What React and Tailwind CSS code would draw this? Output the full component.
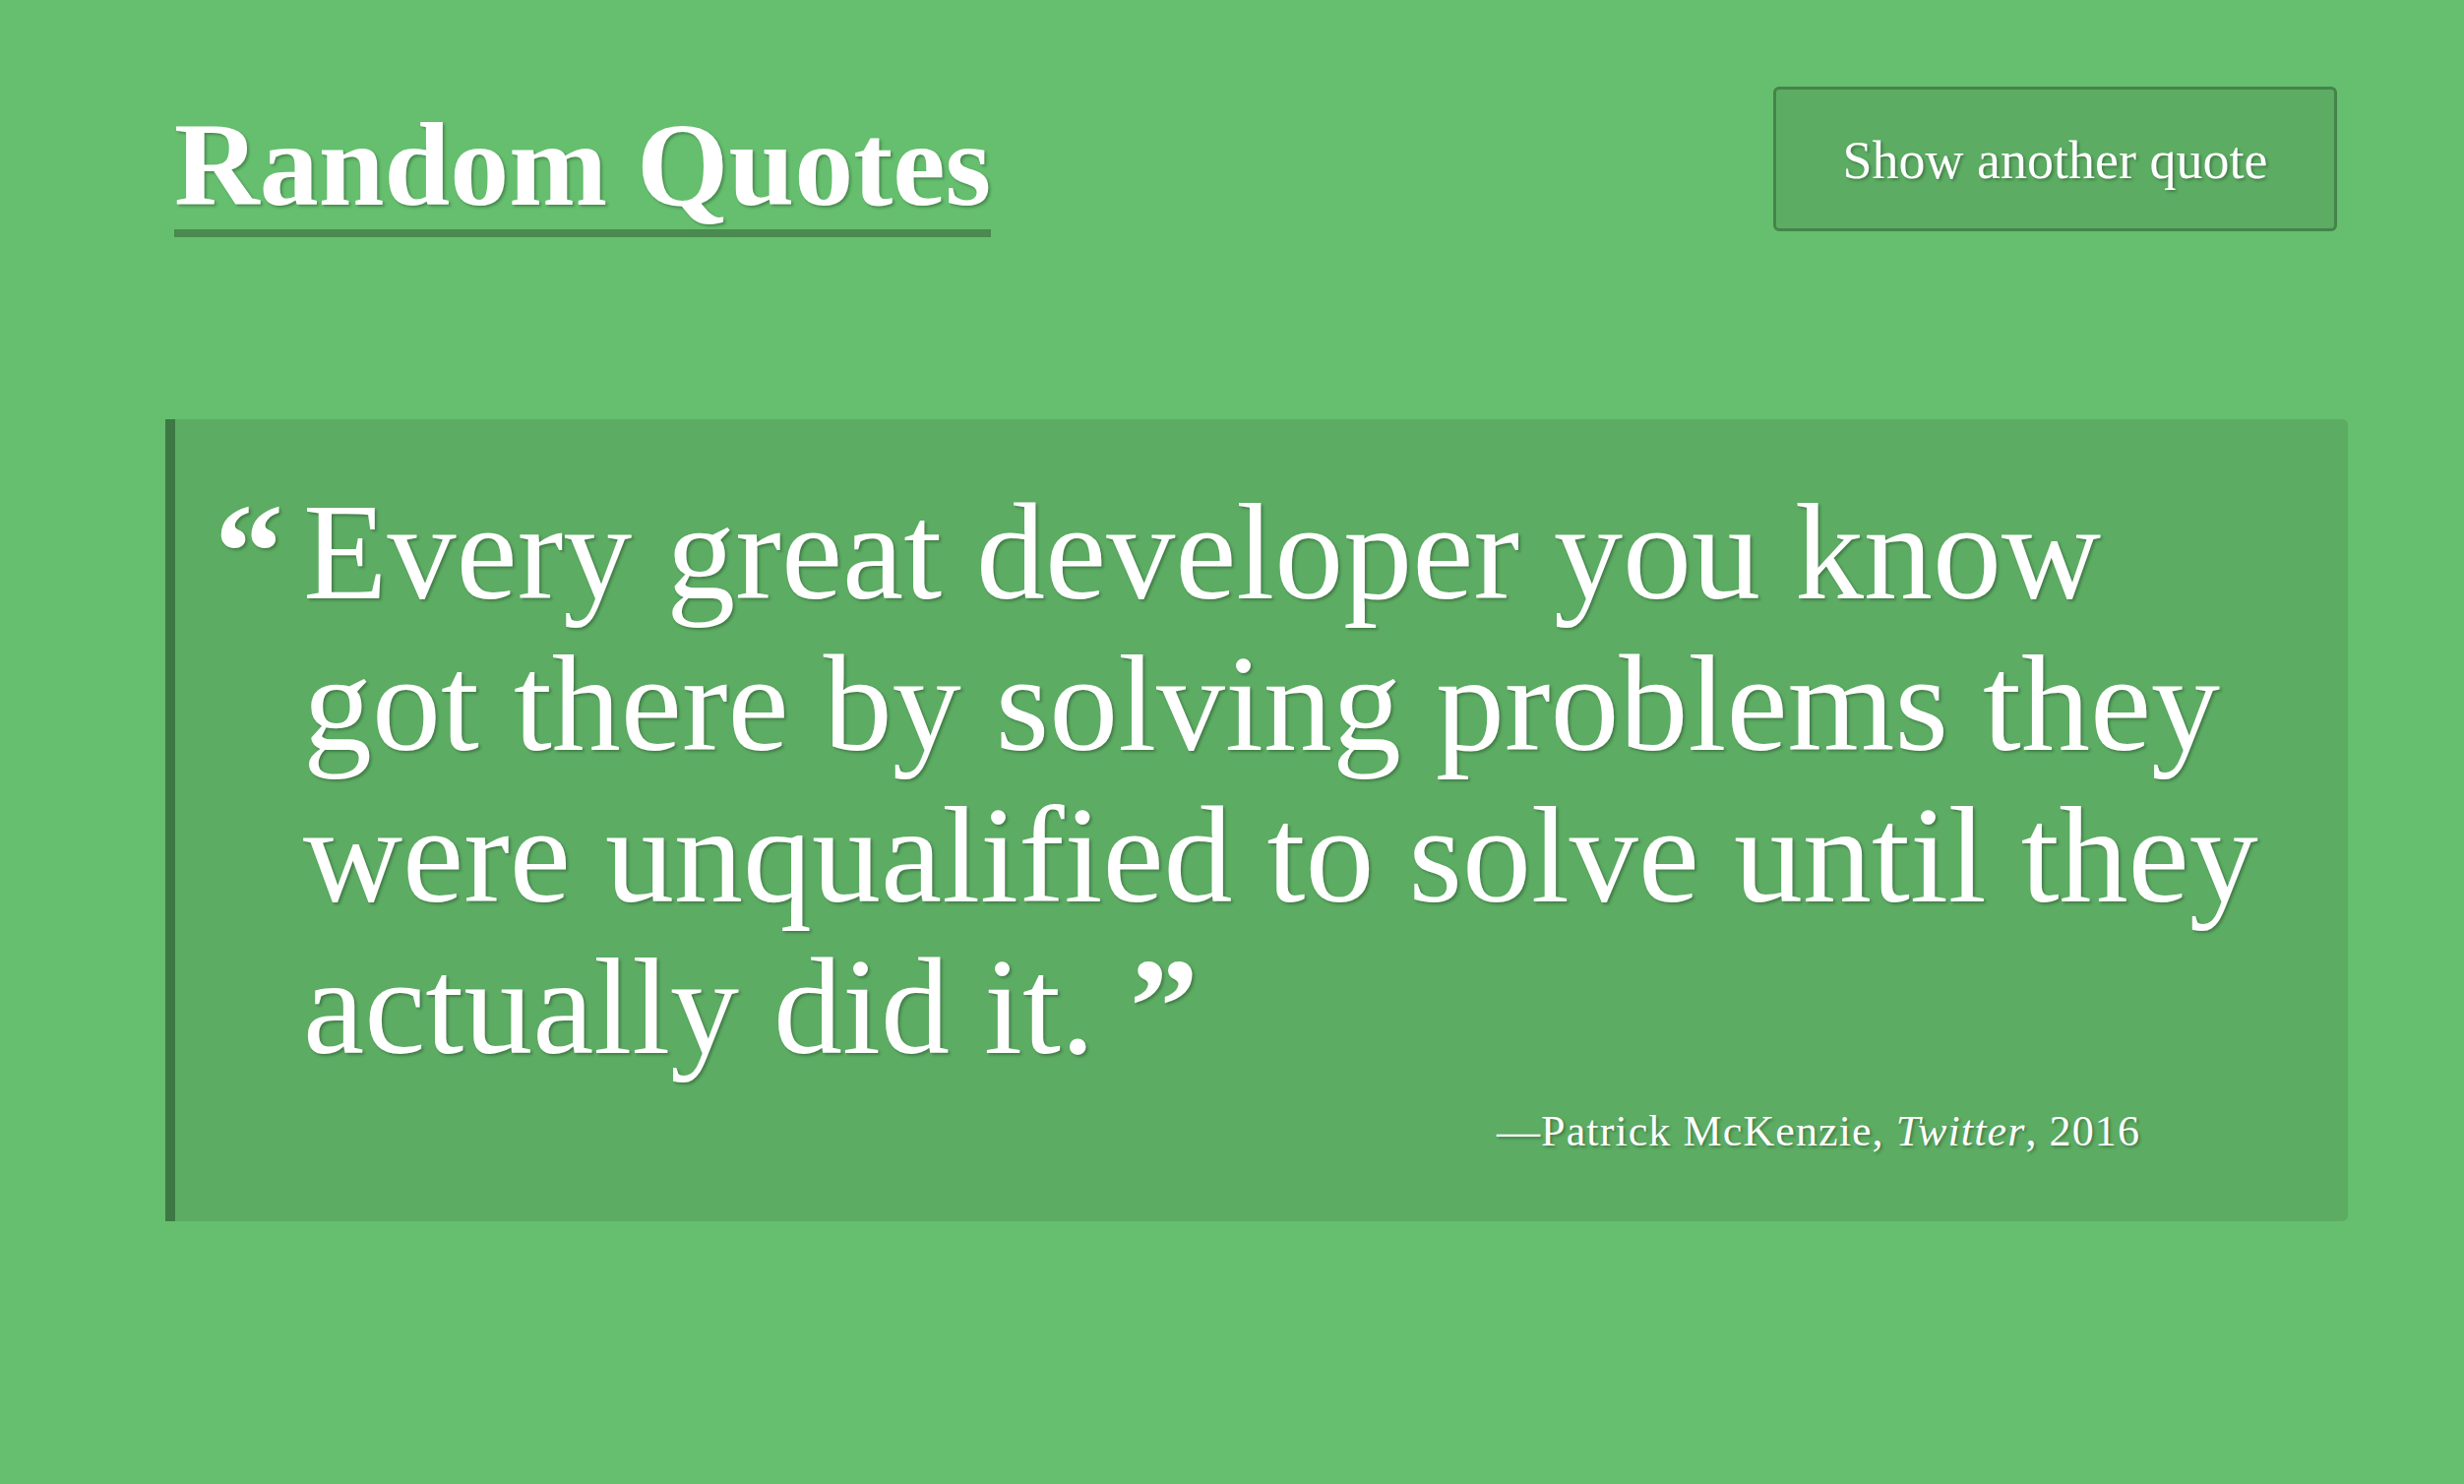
import React, { useState } from "react";

const quotes = [
  {
    lines: [
      "Every great developer you know",
      "got there by solving problems they",
      "were unqualified to solve until they",
      "actually did it.",
    ],
    author: "Patrick McKenzie",
    source: "Twitter",
    year: "2016",
  },
];

const shadow = "[text-shadow:2px_2px_3px_rgba(0,0,0,0.28)]";

const App = () => {
  const [index, setIndex] = useState(0);
  const quote = quotes[index];

  return (
    <div className="min-h-[1508px] w-full bg-[#65bf6e] pl-[168px] pr-[118px] font-['Liberation_Serif',serif] text-white">
      <header className="flex items-start justify-between pt-[88px]">
        <h1 className="ml-[9px] mt-[20px]">
          <span
            className={`inline-block border-b-[8px] border-[#4a894f] pb-[5px] text-[120px] font-bold leading-none ${shadow}`}
          >
            Random Quotes
          </span>
        </h1>
        <button
          type="button"
          onClick={() => setIndex((index + 1) % quotes.length)}
          className={`mr-[11px] h-[147px] w-[573px] rounded-md border-[3px] border-[#44844b] bg-[#5cac63] pt-[4px] text-[54px] text-white ${shadow}`}
        >
          Show another quote
        </button>
      </header>

      <section className="mt-[185px] rounded-r-md border-l-[10px] border-[#3d7845] bg-[#5cac63] pb-[58px] pt-[58px]">
        <blockquote className="flex">
          <span
            className={`w-[130px] shrink-0 pr-[20px] text-right text-[140px] font-bold leading-[1.1] ${shadow}`}
          >
            “
          </span>
          <p className={`text-[140px] leading-[1.1] ${shadow}`}>
            {quote.lines.map((line, i) => (
              <React.Fragment key={i}>
                {line}
                {i === quote.lines.length - 1 ? (
                  <span className="font-bold"> ”</span>
                ) : (
                  <br />
                )}
              </React.Fragment>
            ))}
          </p>
        </blockquote>
        <p
          className={`mt-[17px] pr-[211px] text-right text-[44px] leading-[1.5] tracking-[0.025em] ${shadow}`}
        >
          —{quote.author}, <em>{quote.source}</em>, {quote.year}
        </p>
      </section>
    </div>
  );
};

export default App;
